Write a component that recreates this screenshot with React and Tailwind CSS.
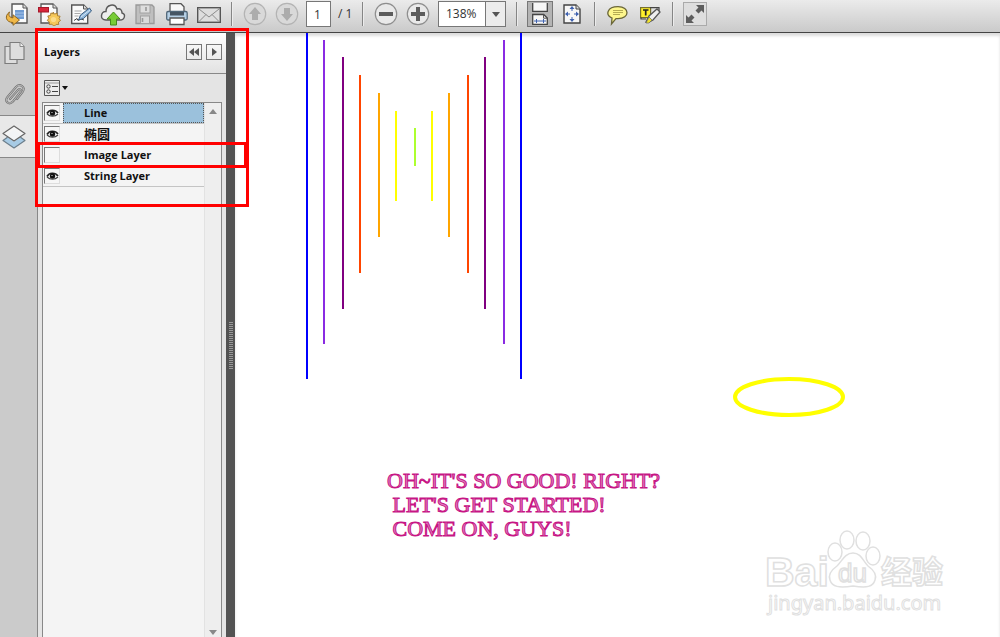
import { useState } from 'react';

const INITIAL_LAYERS = [
  { id: 'line', name: 'Line', lang: 'en', visible: true },
  { id: 'ellipse', name: '椭圆', lang: 'zh', visible: true },
  { id: 'image', name: 'Image Layer', lang: 'en', visible: false },
  { id: 'string', name: 'String Layer', lang: 'en', visible: true },
];

const LINES = [
  { x: 72, y1: 0, y2: 346, color: '#0000ff' },
  { x: 89, y1: 7, y2: 311, color: '#8a2be2' },
  { x: 108, y1: 24, y2: 276, color: '#800080' },
  { x: 125, y1: 42, y2: 240, color: '#ff4500' },
  { x: 144, y1: 60, y2: 204, color: '#ffa500' },
  { x: 161, y1: 78, y2: 168, color: '#ffff00' },
  { x: 180, y1: 95, y2: 133, color: '#adff2f' },
  { x: 197, y1: 78, y2: 168, color: '#ffff00' },
  { x: 214, y1: 60, y2: 204, color: '#ffa500' },
  { x: 233, y1: 42, y2: 240, color: '#ff4500' },
  { x: 250, y1: 24, y2: 276, color: '#800080' },
  { x: 269, y1: 7, y2: 311, color: '#8a2be2' },
  { x: 286, y1: 0, y2: 346, color: '#0000ff' },
];

/* ---------- toolbar icons ---------- */

function OpenIcon() {
  return (
    <svg width="24" height="24" viewBox="0 0 24 24">
      <path d="M7 2h11l4 4v15H7z" fill="#fbfbfb" stroke="#555" strokeWidth="1.4" />
      <path d="M18 2v4h4" fill="#ddd" stroke="#555" />
      <path d="M10 8h9v9h-9z" fill="#6f9bd2" />
      <path d="M10 11h9M10 14h9" stroke="#a9c5ea" />
      <path d="M4.500 10C-1 14 1 20.500 8 20.500v2.800l6.500-5.300L8 12.800v3c-3 0-5-2-3.500-5.800z" fill="#f0b848" stroke="#8d6624" />
    </svg>
  );
}

function CreatePdfIcon() {
  return (
    <svg width="24" height="24" viewBox="0 0 24 24">
      <path d="M4 2h12l4 4v15H4z" fill="#fafafa" stroke="#555" strokeWidth="1.3" />
      <path d="M16 2v4h4" fill="#ddd" stroke="#555" />
      <rect x="1.5" y="5.5" width="10" height="4.5" fill="#d8263a" stroke="#a5192a" />
      <path d="M17 11l1.6 2.1 2.5-1 .4 2.7 2.6.4-1 2.5 1.4 1.8-2 1.5.2 2.5-2.6-.1-1.3 1.400h-1.400l-1.500-1.600-2.600.3v-2.600l-2-1.400 1.500-2.100-1-2.400 2.700-.5.400-2.500 2.500.9z" transform="translate(-1 -1)" fill="#f5c85a" stroke="#a87b2c" strokeWidth="0.9" />
      <circle cx="16.5" cy="17.5" r="2.6" fill="#fbdc8c" />
    </svg>
  );
}

function SignIcon() {
  return (
    <svg width="24" height="24" viewBox="0 0 24 24">
      <path d="M2.7 3h12l4 4v14.5h-16z" fill="#fafafa" stroke="#555" strokeWidth="1.4" />
      <path d="M14.5 3v4h4" fill="#ddd" stroke="#555" />
      <path d="M5.5 9h7M5.5 11.5h6M5.5 14h4" stroke="#aaa" />
      <path d="M5 18.5l3-2 1 2 3-1.5 3 1" fill="none" stroke="#444" />
      <path d="M9.5 18l2-5 9-7 2 3-8 7.5z" fill="#8fb6da" stroke="#3d5e80" />
      <path d="M12 15l9-7" stroke="#d5e6f5" />
    </svg>
  );
}

function CloudIcon() {
  return (
    <svg width="26" height="24" viewBox="0 0 26 24">
      <path d="M6 18C-1 18 1 9 6 9.5 6 2 15 1 17 7c4-1 5 2 5 4 4 1 3 7-2 7z" fill="#eee" stroke="#595959" strokeWidth="1.4" />
      <path d="M13.5 10l6.5 7h-3.5v6h-6v-6H7z" fill="#78cc35" stroke="#468a1b" />
    </svg>
  );
}

function SaveIcon() {
  return (
    <svg width="24" height="24" viewBox="0 0 24 24">
      <path d="M3 3h16l2 2v16.500H3z" fill="#bfbfbf" stroke="#999" strokeWidth="1.3" />
      <rect x="7" y="3" width="10" height="8" fill="#dedede" stroke="#a2a2a2" />
      <rect x="7.5" y="14" width="9" height="7.5" fill="#dadada" stroke="#a2a2a2" />
      <path d="M9.500 16v4M13 5v4" stroke="#999" strokeWidth="1.6" />
    </svg>
  );
}

function PrintIcon() {
  return (
    <svg width="24" height="24" viewBox="0 0 24 24">
      <path d="M5 1.7h11l3 3V11H5z" fill="#f7f7f7" stroke="#555" strokeWidth="1.3" />
      <rect x="1.7" y="9.5" width="20.5" height="8.5" rx="1.5" fill="#b5cfe5" stroke="#4f6577" strokeWidth="1.3" />
      <rect x="5" y="10" width="14" height="3.5" fill="#465563" />
      <path d="M5 16h14v6.5H5z" fill="#fff" stroke="#555" strokeWidth="1.3" />
    </svg>
  );
}

function MailIcon() {
  return (
    <svg width="24" height="24" viewBox="0 0 24 24">
      <rect x="0.7" y="5.7" width="22.6" height="14.6" fill="#dedede" stroke="#555" strokeWidth="1.4" />
      <path d="M2 7l10 8 10-8M2 19.5l7-7M22 19.5l-7-7" fill="none" stroke="#8c8c8c" />
    </svg>
  );
}

function RoundIcon({ path, muted }) {
  return (
    <svg width="24" height="24" viewBox="0 0 24 24">
      <circle cx="12" cy="12" r="10.7" fill={muted ? '#d9d9d9' : '#e9e9e9'} stroke={muted ? '#b3b3b3' : '#8e8e8e'} strokeWidth="1.2" />
      <path d={path} fill={muted ? '#acacac' : '#5c5c5c'} />
    </svg>
  );
}

function FitWidthIcon() {
  return (
    <svg width="22" height="22" viewBox="0 0 22 22">
      <path d="M3.7 0v8.3h14.6V0" fill="#f7f7f7" stroke="#444" strokeWidth="1.3" />
      <path d="M3.7 21.5v-10h11l3.6 3.5v6.5z" fill="#f7f7f7" stroke="#444" strokeWidth="1.3" />
      <path d="M14.5 11.5v3.7h3.7" fill="none" stroke="#555" />
      <path d="M5 18h12M7.5 16v4M14.5 16v4" stroke="#3f62b0" />
    </svg>
  );
}

function FitPageIcon() {
  return (
    <svg width="22" height="22" viewBox="0 0 22 22">
      <path d="M3 2h12l4 4v14H3z" fill="#f7f7f7" stroke="#444" strokeWidth="1.4" />
      <path d="M15 2v4h4" fill="#ddd" stroke="#444" />
      <path d="M11 4v4M11 14v4M5 11h4M13 11h4" stroke="#3f62b0" />
      <path d="M11 3l2.5 3h-5zM11 19l2.5-3h-5zM4 11l3-2.5v5zM18 11l-3-2.5v5z" fill="#3f62b0" />
    </svg>
  );
}

function CommentIcon() {
  return (
    <svg width="24" height="24" viewBox="0 0 24 24">
      <path d="M12 4.700c12 0 12 12 0 12l-2 0-4.500 5.300.5-6C-1 13 1 4.700 12 4.700z" fill="#fdf68c" stroke="#6a6637" strokeWidth="1.3" />
      <path d="M7 8.5h10M7 10.5h10M7 12.5h7" stroke="#b5ab52" />
    </svg>
  );
}

function HighlightIcon() {
  return (
    <svg width="24" height="24" viewBox="0 0 24 24">
      <rect x="2.6" y="5.6" width="10" height="10" fill="#fff02c" stroke="#77712a" strokeWidth="1.2" />
      <path d="M12 5.6h9V10M3 15.5V17h5" fill="none" stroke="#444" strokeWidth="1.2" />
      <path d="M5 8h5.5M7.7 8v5.500" stroke="#222" strokeWidth="1.7" />
      <path d="M8 20l3-6 8-7 3 3-7 8-4 2z" fill="#eee" stroke="#555" strokeWidth="1.3" />
      <path d="M8 21l3-6 3 3-3 3z" fill="#f1e32d" stroke="#666" strokeWidth="0.7" />
    </svg>
  );
}

function FullscreenIcon() {
  return (
    <svg width="20" height="20" viewBox="0 0 20 20">
      <path d="M11 1h8v8l-2.500-2.500-3 3-3-3 3-3zM1 11l2.500 2.500 3-3 3 3-3 3L9 19H1z" fill="#5d5d5d" />
    </svg>
  );
}

/* ---------- side panel icons ---------- */

function PagesIcon() {
  return (
    <svg width="22" height="24" viewBox="0 0 22 24">
      <path d="M1 5.5h12v17H1z" fill="#ddd" stroke="#7c7c7c" strokeWidth="1.2" />
      <path d="M6 1.5h10l4 4v13H6z" fill="#ddd" stroke="#7c7c7c" strokeWidth="1.2" />
      <path d="M16 1.5v4h4" fill="#f5f5f5" stroke="#888" />
    </svg>
  );
}

function ClipIcon() {
  return (
    <svg width="22" height="24" viewBox="0 0 22 24" fill="none">
      <path d="M6 17l8-9c2-2 4 0 2.500 2L9 19.500c-4 4-9 0-5.500-4.500L12 5c4-4 10 0 6.500 5L13 17" stroke="#777" strokeWidth="2.2" strokeLinecap="round" />
      <path d="M6 17l8-9c2-2 4 0 2.500 2L9 19.500c-4 4-9 0-5.500-4.500L12 5c4-4 10 0 6.500 5L13 17" stroke="#ccc" strokeWidth="0.8" strokeLinecap="round" />
    </svg>
  );
}

function LayersIcon() {
  return (
    <svg width="24" height="24" viewBox="0 0 24 24" strokeLinejoin="round">
      <path d="M12 7.5l11 8-11 7.5-11-7.5z" fill="#a7cbe5" stroke="#6d7f8c" strokeWidth="1.2" />
      <path d="M12 4.5l8 6.5-8 6-8-6z" fill="#d3e4f0" />
      <path d="M12 1l11 7.5L12 16 1 8.5z" fill="#f7f7f7" fillOpacity="0.85" stroke="#666" strokeWidth="1.2" />
    </svg>
  );
}

function EyeIcon() {
  return (
    <svg width="13" height="10" viewBox="0 0 13 10">
      <path d="M1 5.5C3 1.5 9 1 12 5" fill="none" stroke="#222" strokeWidth="1.7" />
      <path d="M1 6c3 3 8 3 11 0" fill="none" stroke="#444" strokeWidth="1.2" />
      <circle cx="6.5" cy="5" r="2.7" fill="#111" />
      <circle cx="6" cy="4.5" r="0.6" fill="#fff" />
    </svg>
  );
}

function ToolButton({ label, children }) {
  return (
    <button type="button" aria-label={label} className="flex h-7 w-8 shrink-0 items-center justify-center">
      {children}
    </button>
  );
}

function Separator() {
  return <div className="mx-1.5 h-6 w-0.5 shrink-0 border-l border-[#858585] bg-[#ececec]" />;
}

function Toolbar() {
  return (
    <header className="flex h-[33px] items-center overflow-hidden border-b border-[#444] bg-linear-to-b from-[#ebebeb] to-[#cacaca] px-px pb-1 text-xs text-[#333]">
      <ToolButton label="Open"><OpenIcon /></ToolButton>
      <ToolButton label="Create PDF"><CreatePdfIcon /></ToolButton>
      <ToolButton label="Sign"><SignIcon /></ToolButton>
      <ToolButton label="Upload"><CloudIcon /></ToolButton>
      <ToolButton label="Save"><SaveIcon /></ToolButton>
      <ToolButton label="Print"><PrintIcon /></ToolButton>
      <ToolButton label="Email"><MailIcon /></ToolButton>
      <Separator />
      <ToolButton label="Previous page"><RoundIcon muted path="M12 5l6 7h-3v6H9v-6H6z" /></ToolButton>
      <ToolButton label="Next page"><RoundIcon muted path="M12 19l6-7h-3V6H9v6H6z" /></ToolButton>
      <input
        aria-label="Page number"
        defaultValue="1"
        className="ml-[3px] h-[26px] w-[25px] shrink-0 border border-[#777] bg-white pl-[7px]"
      />
      <span className="w-[25px] shrink-0 pl-[7px] whitespace-pre">/ 1</span>
      <Separator />
      <ToolButton label="Zoom out"><RoundIcon path="M5 10h14v4H5z" /></ToolButton>
      <ToolButton label="Zoom in"><RoundIcon path="M10 5h4v5h5v4h-5v5h-4v-5H5v-4h5z" /></ToolButton>
      <div className="relative mx-1 h-[26px] w-[68px] shrink-0">
        <select
          aria-label="Zoom level"
          defaultValue="138%"
          className="h-full w-full appearance-none border border-[#777] bg-white pl-[7px]"
        >
          <option>100%</option>
          <option>138%</option>
          <option>200%</option>
        </select>
        <span className="pointer-events-none absolute inset-y-px right-px flex w-5 items-center justify-center border-l border-[#777] bg-[#ececec]">
          <svg width="8" height="5" viewBox="0 0 8 5"><path d="M0 0h8L4 5z" fill="#555" /></svg>
        </span>
      </div>
      <Separator />
      <button type="button" aria-label="Fit width" className="mx-[3px] flex h-[26px] w-[26px] shrink-0 items-center justify-center border border-[#777] bg-[#b4b4b4]">
        <FitWidthIcon />
      </button>
      <ToolButton label="Fit page"><FitPageIcon /></ToolButton>
      <Separator />
      <ToolButton label="Add comment"><CommentIcon /></ToolButton>
      <ToolButton label="Highlight text"><HighlightIcon /></ToolButton>
      <Separator />
      <button type="button" aria-label="Full screen" className="mx-[3px] flex size-6 shrink-0 items-center justify-center border border-[#aaa] bg-[#dedede]">
        <FullscreenIcon />
      </button>
    </header>
  );
}

function SideRail() {
  return (
    <nav className="flex w-[38px] shrink-0 flex-col border-r border-[#888] bg-[#cbcbcb]">
      <button type="button" aria-label="Pages" className="flex h-10 items-center pl-1"><PagesIcon /></button>
      <button type="button" aria-label="Attachments" className="flex h-[42px] items-center pl-1"><ClipIcon /></button>
      <button type="button" aria-label="Layers" className="flex h-[43px] items-center border-y border-[#888] bg-[#e8e8e8] pl-0.5">
        <LayersIcon />
      </button>
    </nav>
  );
}

function LayerRow({ layer, selected, onToggle, onSelect }) {
  return (
    <li className="flex h-[21px] items-center border-b border-[#c4c4c4]">
      <label className="ml-px flex size-4 items-center justify-center border border-t-[#777] border-r-[#ddd] border-b-[#ddd] border-l-[#777] bg-[#f6f6f6]">
        <input
          type="checkbox"
          aria-label={layer.name}
          checked={layer.visible}
          onChange={() => onToggle(layer.id)}
          className="sr-only"
        />
        {layer.visible && <EyeIcon />}
      </label>
      <button
        type="button"
        lang={layer.lang}
        onClick={() => onSelect(layer.id)}
        className={`ml-[3px] h-5 flex-1 pl-5 text-left text-[11px] leading-4 font-bold [&:lang(zh)]:text-[13px] ${selected ? 'border border-dotted border-[#555] bg-[#9bc1dc]' : 'border border-transparent'}`}
      >
        {layer.name}
      </button>
    </li>
  );
}

function LayersPanel({ layers, selectedId, onToggle, onSelect }) {
  return (
    <aside className="flex w-[188px] shrink-0 flex-col bg-[#e4e4e4] text-[#111]">
      <div className="flex h-[41px] items-center gap-1 border-b border-[#888] bg-linear-to-b from-white to-[#e2e2e2] pr-1 pb-0.5 pl-1.5">
        <h2 className="flex-1 text-[11px] font-bold">Layers</h2>
        <button type="button" aria-label="Collapse panel" className="flex size-4 items-center justify-center border border-[#777]">
          <svg width="10" height="8" viewBox="0 0 10 8"><path d="M5 0v8L0 4zM10 0v8L5 4z" fill="#555" /></svg>
        </button>
        <button type="button" aria-label="Expand panel" className="flex size-4 items-center justify-center border border-[#777]">
          <svg width="5" height="8" viewBox="0 0 5 8"><path d="M0 0v8l5-4z" fill="#555" /></svg>
        </button>
      </div>
      <div className="flex h-7 items-center pl-1.5">
        <button type="button" aria-label="Options" className="flex items-center gap-0.5">
          <svg width="16" height="16" viewBox="0 0 16 16">
            <path d="M0.5 0.5h15v15H0.5z" fill="#ededed" stroke="#555" />
            <path d="M1 3h14" stroke="#999" />
            <circle cx="4.5" cy="6.5" r="1.7" fill="none" stroke="#444" />
            <circle cx="4.5" cy="11.5" r="1.7" fill="none" stroke="#444" />
            <path d="M8 6.5h6M8 11.5h6" stroke="#444" />
          </svg>
          <svg width="6" height="4" viewBox="0 0 6 4"><path d="M0 0h6L3 4z" fill="#111" /></svg>
        </button>
      </div>
      <div className="mx-1 flex flex-1 border border-b-0 border-[#888] bg-[#f4f4f4]">
        <ul className="flex-1">
          {layers.map((layer) => (
            <LayerRow
              key={layer.id}
              layer={layer}
              selected={layer.id === selectedId}
              onToggle={onToggle}
              onSelect={onSelect}
            />
          ))}
        </ul>
        <div className="flex w-[17px] flex-col items-center justify-between border-l border-[#e2e2e2] bg-[#eee] pt-1.5 pb-0.5">
          <svg width="8" height="5" viewBox="0 0 8 5"><path d="M0 5h8L4 0z" fill="#888" /></svg>
          <svg width="8" height="5" viewBox="0 0 8 5"><path d="M0 0h8L4 5z" fill="#888" /></svg>
        </div>
      </div>
    </aside>
  );
}

function Splitter() {
  return (
    <div className="flex w-[9px] shrink-0 items-center justify-center bg-[#535353] pt-5">
      <svg width="4" height="47" viewBox="0 0 4 47">
        <path d="M2 0v47" stroke="#999" strokeWidth="4" strokeDasharray="1 1" />
      </svg>
    </div>
  );
}

function Watermark() {
  return (
    <svg className="absolute top-[490px] left-[525px]" width="200" height="100" viewBox="0 0 200 100">
      <g fill="#fff" stroke="#e0e0e0" strokeWidth="1.5">
        <text x="5" y="63" fontSize="41" fontWeight="bold" fontFamily="Liberation Sans, sans-serif">Bai</text>
        <ellipse cx="75" cy="29" rx="7" ry="9" />
        <ellipse cx="87" cy="17" rx="7" ry="9" />
        <ellipse cx="103" cy="18" rx="7" ry="9" />
        <ellipse cx="113" cy="33" rx="7" ry="9" />
        <path d="M93 30c-8 0-11 8-16 13-7 5-9 9-7 14 2 7 9 8 23 6 14 2 20 1 22-6 2-5 0-9-7-14-5-5-7-13-15-13z" />
        <text x="78" y="59" fontSize="26" fontFamily="Liberation Sans, sans-serif">du</text>
        <text x="121" y="60" fontSize="31" fontWeight="bold" fontFamily="Noto Sans CJK SC, sans-serif">经验</text>
        <text x="8" y="87" fontSize="20" strokeWidth="1" fontFamily="Noto Sans, sans-serif">jingyan.baidu.com</text>
      </g>
    </svg>
  );
}

function Document({ isVisible }) {
  return (
    <main className="relative flex-1 overflow-hidden bg-white inset-shadow-[0_3px_3px_#dddddd]">
      <svg className="absolute top-0 left-0" width="640" height="400" viewBox="0 0 640 400">
        {isVisible('line') && LINES.map((line) => (
          <path key={line.x} d={`M${line.x} ${line.y1}V${line.y2}`} stroke={line.color} strokeWidth="2" />
        ))}
        {isVisible('ellipse') && (
          <ellipse cx="554" cy="364" rx="54" ry="18" fill="none" stroke="#ffff00" strokeWidth="4" />
        )}
      </svg>
      {isVisible('string') && (
        <p className="absolute top-[436px] left-[152px] font-['Liberation_Serif',serif] text-[22px] leading-6 whitespace-pre text-[#e07fbe] [-webkit-text-stroke:1px_#c71585]">
          {"OH~IT'S SO GOOD! RIGHT?\n LET'S GET STARTED!\n COME ON, GUYS!"}
        </p>
      )}
      <Watermark />
    </main>
  );
}

export default function App() {
  const [layers, setLayers] = useState(INITIAL_LAYERS);
  const [selectedId, setSelectedId] = useState('line');

  const toggleLayer = (id) => {
    setLayers(layers.map((layer) => (layer.id === id ? { ...layer, visible: !layer.visible } : layer)));
  };

  const isVisible = (id) => layers.some((layer) => layer.id === id && layer.visible);

  return (
    <div className="relative flex min-h-screen flex-col font-['Open_Sans','Noto_Sans_CJK_SC',sans-serif]">
      <Toolbar />
      <div className="flex flex-1">
        <SideRail />
        <LayersPanel layers={layers} selectedId={selectedId} onToggle={toggleLayer} onSelect={setSelectedId} />
        <Splitter />
        <Document isVisible={isVisible} />
      </div>

      {/* callout frames over the panel */}
      <div className="pointer-events-none absolute top-7 left-[35px] h-[179px] w-[214px] border-3 border-[#f00]" />
      <div className="pointer-events-none absolute top-[142px] left-[37px] h-[26px] w-[210px] border-3 border-[#f00]" />
    </div>
  );
}
